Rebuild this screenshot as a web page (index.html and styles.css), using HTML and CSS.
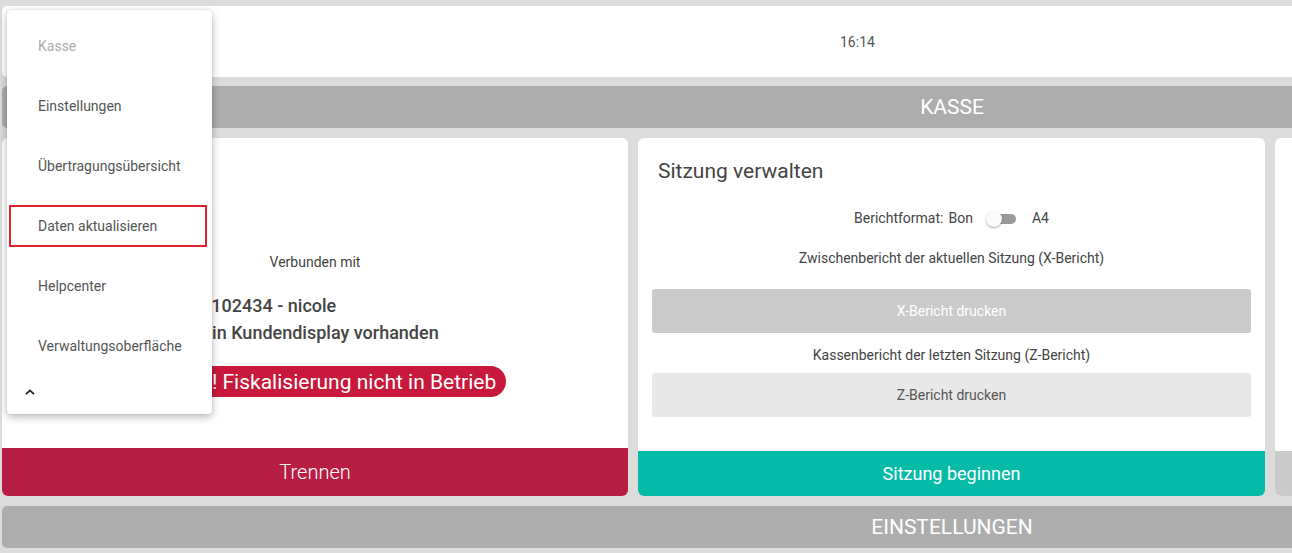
FILE: index.html
```html
<!DOCTYPE html>
<html lang="de">
<head>
<meta charset="utf-8">
<title>Kasse</title>
<link rel="stylesheet" href="styles.css">
</head>
<body>
<div class="page">
  <header class="topbar">
    <span class="time">16:14</span>
  </header>

  <div class="section-bar">KASSE</div>

  <div class="cards">
    <section class="card">
      <div class="card-body center">
        <div class="label">Verbunden mit</div>
        <div class="info">
          <div class="info-line">
            <svg class="info-icon" viewBox="0 0 16 16" width="16" height="16"><circle cx="8" cy="5" r="3" fill="#444"/><path d="M2 15c0-3.3 2.7-5 6-5s6 1.7 6 5z" fill="#444"/></svg>102434 - nicole
          </div>
          <div class="info-line">Kein Kundendisplay vorhanden</div>
        </div>
        <div class="alert">Achtung! Fiskalisierung nicht in Betrieb</div>
      </div>
      <button class="card-action danger">Trennen</button>
    </section>

    <section class="card">
      <div class="card-body">
        <h2 class="card-title">Sitzung verwalten</h2>
        <div class="format-row">
          <span>Berichtformat:</span>
          <span class="format-opt">Bon</span>
          <span class="toggle"><span class="toggle-track"></span><span class="toggle-knob"></span></span>
          <span>A4</span>
        </div>
        <div class="hint first">Zwischenbericht der aktuellen Sitzung (X-Bericht)</div>
        <button class="report-btn disabled">X-Bericht drucken</button>
        <div class="hint">Kassenbericht der letzten Sitzung (Z-Bericht)</div>
        <button class="report-btn light">Z-Bericht drucken</button>
      </div>
      <button class="card-action primary">Sitzung beginnen</button>
    </section>

    <section class="card">
      <div class="card-body"></div>
      <button class="card-action muted">&nbsp;</button>
    </section>
  </div>

  <div class="section-bar">EINSTELLUNGEN</div>
</div>

<nav class="menu">
  <div class="menu-item inactive">Kasse</div>
  <div class="menu-item">Einstellungen</div>
  <div class="menu-item">Übertragungsübersicht</div>
  <div class="menu-item highlighted"><span class="mark">Daten aktualisieren</span></div>
  <div class="menu-item">Helpcenter</div>
  <div class="menu-item">Verwaltungsoberfläche</div>
  <div class="menu-collapse">
    <svg viewBox="0 0 10 6" width="10" height="6"><path d="M1 5.2L5 1.4l4 3.8" fill="none" stroke="#222" stroke-width="1.8"/></svg>
  </div>
</nav>
</body>
</html>
```

FILE: styles.css
```css
* { box-sizing: border-box; }

html, body {
  margin: 0;
  padding: 0;
}

body {
  width: 1292px;
  height: 553px;
  overflow: hidden;
  background: #dcdcdc;
  font-family: Roboto, "Noto Sans", sans-serif;
  color: #444;
  position: relative;
}

.page {
  width: 1902px;
  padding: 6px 0 0 2px;
  display: flex;
  flex-direction: column;
}

.topbar {
  height: 71px;
  background: #fff;
  border-radius: 5px;
  display: flex;
  align-items: center;
  padding-left: 838px;
}

.time {
  font-size: 14px;
  color: #555;
}

.section-bar {
  margin-top: 9px;
  height: 42px;
  background: #adadad;
  border-radius: 5px;
  color: #fff;
  font-size: 21px;
  display: flex;
  align-items: center;
  justify-content: center;
}

.cards {
  margin-top: 10px;
  margin-bottom: 10px;
  height: 358px;
  display: grid;
  grid-template-columns: 626px 627px 627px;
  gap: 10px;
}

.cards + .section-bar { margin-top: 0; }

.card {
  background: #fff;
  border-radius: 6px;
  display: flex;
  flex-direction: column;
  overflow: hidden;
}

.card-body {
  flex: 1;
  display: flex;
  flex-direction: column;
  padding: 21px 14px 0;
}

.card-body.center {
  align-items: center;
  padding-top: 116px;
}

.label {
  font-size: 14px;
  line-height: 17px;
  color: #444;
}

.info {
  margin-top: 21px;
  display: flex;
  flex-direction: column;
  align-items: flex-start;
}

.info-line {
  font-size: 18px;
  font-weight: 500;
  line-height: 27px;
  color: #444;
  display: flex;
  align-items: center;
}

.info-icon {
  margin-right: 4px;
}

.alert {
  margin-top: 20px;
  height: 31px;
  padding: 0 10px;
  background: #c8193c;
  color: #fff;
  font-size: 21px;
  border-radius: 16px;
  display: flex;
  align-items: center;
  margin-left: 0;
}

.card-action {
  border: 0;
  margin: 0;
  font-family: inherit;
  color: #fff;
  font-size: 19px;
  font-weight: 300;
  display: flex;
  align-items: center;
  justify-content: center;
  height: 45px;
  flex: none;
}

.card-action.danger {
  background: #b81d44;
  height: 48px;
  font-size: 20px;
}

.card-action.primary {
  background: #05bba8;
  font-weight: 400;
  font-size: 18px;
}

.card-action.muted {
  background: #cacaca;
}

.card-title {
  margin: 0 0 0 6px;
  font-size: 21px;
  line-height: 24px;
  font-weight: 400;
  color: #444;
}

.format-row {
  margin-top: 25px;
  height: 20px;
  display: flex;
  align-items: center;
  justify-content: center;
  font-size: 14px;
  color: #444;
}

.format-opt { margin-left: 5px; }

.toggle {
  position: relative;
  width: 30px;
  height: 16px;
  margin: 2px 16px 0 13px;
  display: inline-block;
}

.toggle-track {
  position: absolute;
  left: 4px;
  right: 0;
  top: 3px;
  height: 10px;
  border-radius: 5px;
  background: #9a9a9a;
}

.toggle-knob {
  position: absolute;
  left: 0;
  top: 0;
  width: 16px;
  height: 16px;
  border-radius: 50%;
  background: #fafafa;
  box-shadow: 0 1px 2px rgba(0,0,0,0.35);
}

.hint {
  margin-top: 14px;
  font-size: 14px;
  line-height: 16px;
  text-align: center;
  color: #444;
}

.hint.first { margin-top: 22px; }

.report-btn {
  border: 0;
  font-family: inherit;
  font-size: 14px;
  height: 44px;
  border-radius: 3px;
  margin-top: 23px;
  width: 100%;
}

.hint + .report-btn.light { margin-top: 10px; }

.report-btn.disabled {
  background: #cbcbcb;
  color: #fff;
}

.report-btn.light {
  background: #e8e8e8;
  color: #555;
}

.menu {
  position: absolute;
  left: 7px;
  top: 10px;
  width: 205px;
  height: 404px;
  background: #fff;
  border-radius: 4px;
  box-shadow: 0 3px 8px rgba(0,0,0,0.28), 0 0 2px rgba(0,0,0,0.12);
  padding-top: 6px;
  display: flex;
  flex-direction: column;
}

.menu-item {
  height: 60px;
  display: flex;
  align-items: center;
  padding-left: 31px;
  font-size: 14px;
  color: #555;
}

.menu-item.inactive { color: #adadad; }

.menu-item.highlighted { padding-left: 2px; }

.mark {
  width: 198px;
  height: 42px;
  border: 2px solid #e0202e;
  display: flex;
  align-items: center;
  padding-left: 27px;
}

.menu-collapse {
  height: 32px;
  display: flex;
  align-items: center;
  padding-left: 18px;
}
```
